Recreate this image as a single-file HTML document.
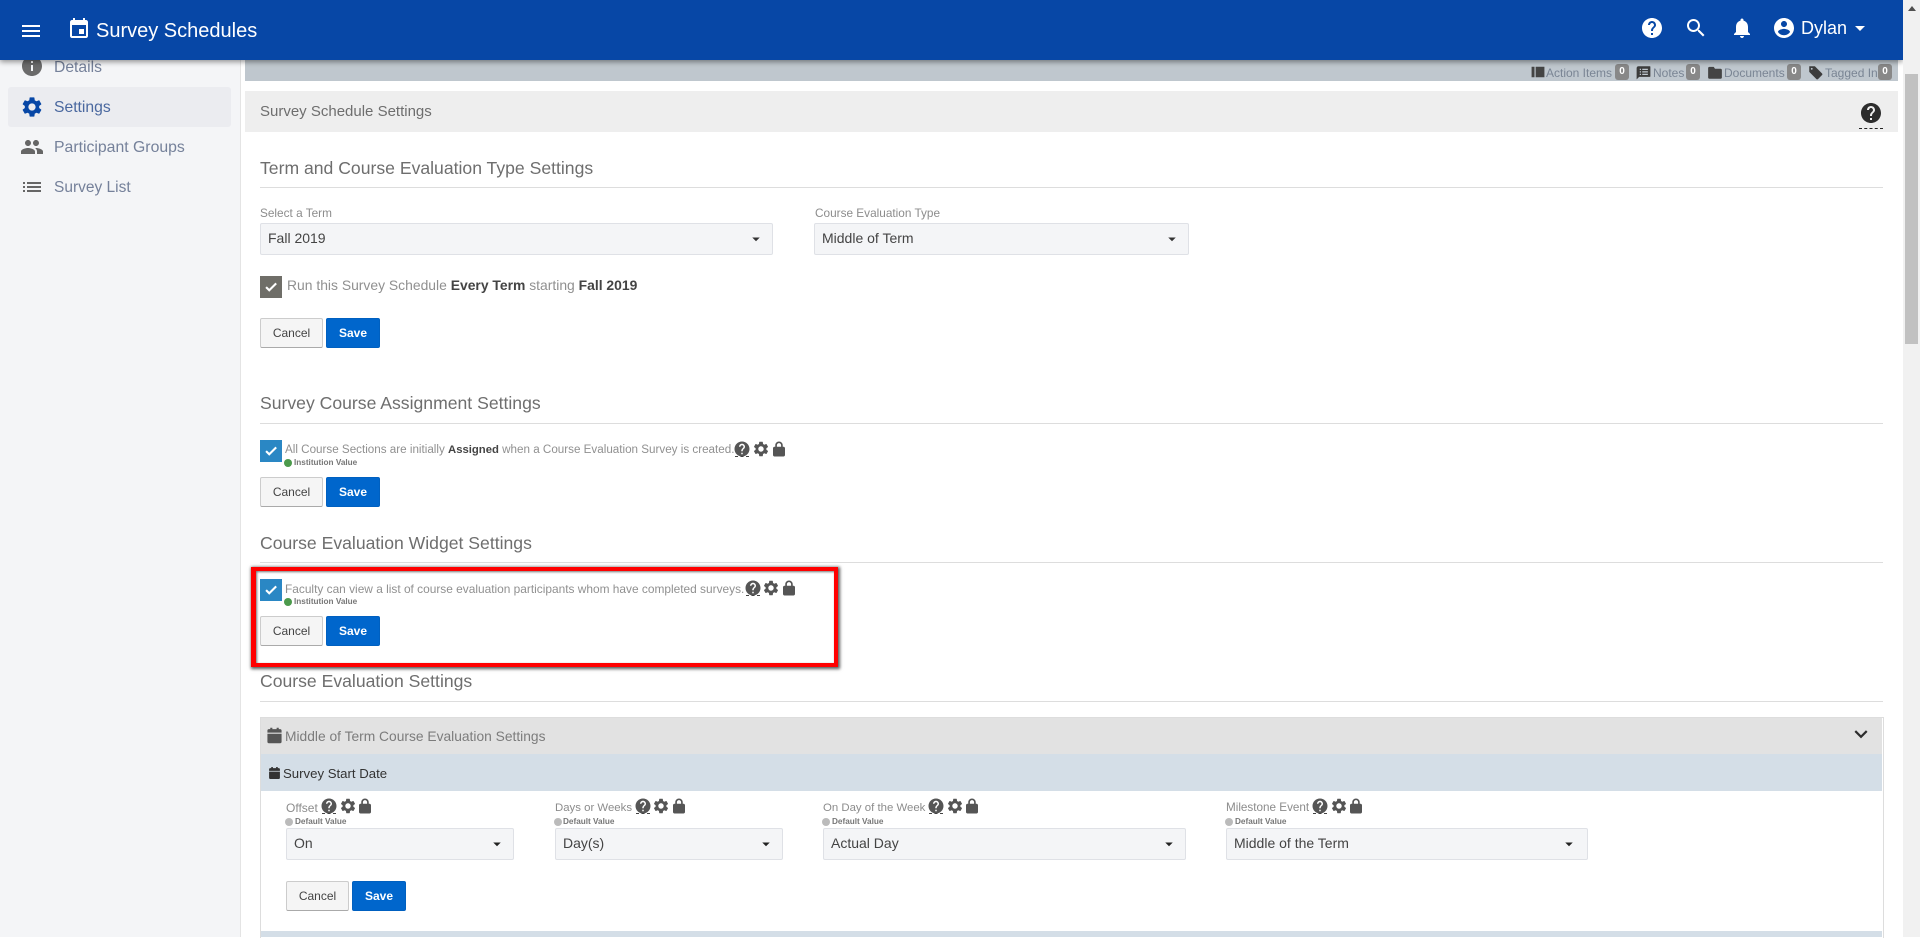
<!DOCTYPE html>
<html><head><meta charset="utf-8"><title>Survey Schedules</title>
<style>
html,body{margin:0;padding:0;width:1920px;height:937px;overflow:hidden;background:#fff;font-family:"Liberation Sans",sans-serif}
.a{position:absolute}
.t{position:absolute;white-space:nowrap;line-height:20px;height:20px}
svg.i{position:absolute;display:block}
.h{font-size:17.6px;color:#6e6e6e}
.hr{position:absolute;left:260px;width:1623px;height:1px;background:#ddd}
.sel{position:absolute;box-sizing:border-box;background:#f4f5f7;border:1px solid #dfe1e6;border-radius:2px}
.val{font-size:14px;color:#444}
.lab{font-size:11.8px;color:#8c8c8c}
.lab2{font-size:11.4px;color:#8c8c8c}
.nav{font-size:15.7px;color:#75819a}
.body{font-size:11.9px;color:#909090}
.body b{color:#444;font-weight:bold}
.btn{position:absolute;box-sizing:border-box;height:30px;font-size:12px;line-height:28px;text-align:center;border-radius:2px}
.c{width:63px;background:#f5f5f5;border:1px solid #ccc;border-bottom-color:#aaa;color:#444}
.s{width:54px;background:#0066cc;border:1px solid #0060c0;color:#fff;font-weight:bold}
.cb{position:absolute;width:22px;height:22px;background:#2a87c4}
.dot{position:absolute;width:8px;height:8px;border-radius:50%}
.m{font-size:8.2px;font-weight:bold;color:#777;line-height:10px;height:10px}
.tag{font-size:12px;color:#7a8594}
.bd{position:absolute;top:64px;width:14px;height:16px;background:#888;border-radius:3px;color:#fff;font-size:10px;font-weight:bold;text-align:center;line-height:15px}
.dash{position:absolute;height:0;border-top:1px dashed #444}
</style></head>
<body>
<svg width="0" height="0" style="position:absolute">
<symbol id="menu" viewBox="0 0 24 24"><path d="M3 18h18v-2H3v2zm0-5h18v-2H3v2zm0-7v2h18V6H3z"/></symbol>
<symbol id="event" viewBox="0 0 24 24"><path d="M17 12h-5v5h5v-5zM16 1v2H8V1H6v2H5c-1.11 0-1.99.9-1.99 2L3 19c0 1.1.89 2 2 2h14c1.1 0 2-.9 2-2V5c0-1.1-.9-2-2-2h-1V1h-2zm3 18H5V8h14v11z"/></symbol>
<symbol id="info" viewBox="0 0 24 24"><path d="M12 2C6.48 2 2 6.48 2 12s4.48 10 10 10 10-4.48 10-10S17.52 2 12 2zm1 15h-2v-6h2v6zm0-8h-2V7h2v2z"/></symbol>
<symbol id="gear" viewBox="0 0 24 24"><path d="M19.14 12.94c.04-.3.06-.61.06-.94 0-.32-.02-.64-.07-.94l2.03-1.58c.18-.14.23-.41.12-.61l-1.92-3.32c-.12-.22-.37-.29-.59-.22l-2.39.96c-.5-.38-1.03-.7-1.62-.94l-.36-2.54c-.04-.24-.24-.41-.48-.41h-3.84c-.24 0-.43.17-.47.41l-.36 2.54c-.59.24-1.13.57-1.62.94l-2.39-.96c-.22-.08-.47 0-.59.22L2.74 8.87c-.12.21-.08.47.12.61l2.03 1.58c-.05.3-.09.63-.09.94s.02.64.07.94l-2.03 1.58c-.18.14-.23.41-.12.61l1.92 3.32c.12.22.37.29.59.22l2.39-.96c.5.38 1.03.7 1.62.94l.36 2.54c.05.24.24.41.48.41h3.84c.24 0 .44-.17.47-.41l.36-2.54c.59-.24 1.13-.56 1.62-.94l2.39.96c.22.08.47 0 .59-.22l1.92-3.32c.12-.22.07-.47-.12-.61l-2.01-1.58zM12 15.6c-1.98 0-3.6-1.62-3.6-3.6s1.62-3.6 3.6-3.6 3.6 1.62 3.6 3.6-1.62 3.6-3.6 3.6z"/></symbol>
<symbol id="people" viewBox="0 0 24 24"><path d="M16 11c1.66 0 2.99-1.34 2.99-3S17.66 5 16 5c-1.66 0-3 1.34-3 3s1.34 3 3 3zm-8 0c1.66 0 2.99-1.34 2.99-3S9.66 5 8 5C6.34 5 5 6.34 5 8s1.34 3 3 3zm0 2c-2.33 0-7 1.17-7 3.5V19h14v-2.5c0-2.33-4.67-3.5-7-3.5zm8 0c-.29 0-.62.02-.97.05 1.16.84 1.97 1.97 1.97 3.45V19h6v-2.5c0-2.33-4.67-3.5-7-3.5z"/></symbol>
<symbol id="list" viewBox="0 0 24 24"><path d="M3 13h2v-2H3v2zm0 4h2v-2H3v2zm0-8h2V7H3v2zm4 4h14v-2H7v2zm0 4h14v-2H7v2zM7 7v2h14V7H7z"/></symbol>
<symbol id="help" viewBox="0 0 24 24"><path d="M12 2C6.48 2 2 6.48 2 12s4.48 10 10 10 10-4.48 10-10S17.52 2 12 2zm1 17h-2v-2h2v2zm2.07-7.75l-.9.92C13.45 12.9 13 13.5 13 15h-2v-.5c0-1.1.45-2.1 1.17-2.83l1.24-1.26c.37-.36.59-.86.59-1.41 0-1.1-.9-2-2-2s-2 .9-2 2H8c0-2.21 1.79-4 4-4s4 1.79 4 4c0 .88-.36 1.68-.93 2.25z"/></symbol>
<symbol id="search" viewBox="0 0 24 24"><path d="M15.5 14h-.79l-.28-.27C15.41 12.59 16 11.11 16 9.5 16 5.91 13.09 3 9.5 3S3 5.91 3 9.5 5.91 16 9.5 16c1.61 0 3.09-.59 4.23-1.57l.27.28v.79l5 4.99L20.49 19l-4.99-5zm-6 0C7.01 14 5 11.99 5 9.5S7.01 5 9.5 5 14 7.01 14 9.5 11.99 14 9.5 14z"/></symbol>
<symbol id="bell" viewBox="0 0 24 24"><path d="M12 22c1.1 0 2-.9 2-2h-4c0 1.1.89 2 2 2zm6-6v-5c0-3.07-1.64-5.64-4.5-6.32V4c0-.83-.67-1.5-1.5-1.5s-1.5.67-1.5 1.5v.68C7.63 5.36 6 7.92 6 11v5l-2 2v1h16v-1l-2-2z"/></symbol>
<symbol id="acct" viewBox="0 0 24 24"><path d="M12 2C6.48 2 2 6.48 2 12s4.48 10 10 10 10-4.48 10-10S17.52 2 12 2zm0 3c1.66 0 3 1.34 3 3s-1.34 3-3 3-3-1.34-3-3 1.34-3 3-3zm0 14.2c-2.5 0-4.71-1.28-6-3.22.03-1.99 4-3.08 6-3.08 1.99 0 5.97 1.09 6 3.08-1.29 1.94-3.5 3.22-6 3.22z"/></symbol>
<symbol id="drop" viewBox="0 0 24 24"><path d="M7 10l5 5 5-5z"/></symbol>
<symbol id="chev" viewBox="0 0 24 24"><path d="M16.59 8.59L12 13.17 7.41 8.59 6 10l6 6 6-6z"/></symbol>
<symbol id="check" viewBox="0 0 24 24"><path d="M9 16.17L4.83 12l-1.42 1.41L9 19 21 7l-1.41-1.41z" stroke="currentColor" stroke-width="1.6"/></symbol>
<symbol id="lock" viewBox="0 0 24 24"><path d="M18 9h-1V7c0-2.76-2.24-5-5-5S7 4.24 7 7v2H6c-1.1 0-2 .9-2 2v9c0 1.1.9 2 2 2h12c1.1 0 2-.9 2-2v-9c0-1.1-.9-2-2-2zM9.2 7c0-1.55 1.25-2.8 2.8-2.8s2.8 1.25 2.8 2.8v2H9.2V7z"/></symbol>
<symbol id="cal" viewBox="0 0 24 24"><path d="M6 1h3v3H6zM15 1h3v3h-3zM4 3h16c1.1 0 2 .9 2 2v3H2V5c0-1.1.9-2 2-2zM2 9.5h20V21c0 1.1-.9 2-2 2H4c-1.1 0-2-.9-2-2z"/></symbol>
<symbol id="book" viewBox="0 0 24 24"><path d="M1 3h5v18H1zM8 3h15v18H8z"/></symbol>
<symbol id="note" viewBox="0 0 24 24"><path d="M4 2h18c.6 0 1 .4 1 1v15c0 .6-.4 1-1 1H5l-4 4V5c0-1.7 1.3-3 3-3zm2 4v2h2V6zm4 0v2h9V6zM6 10v2h2v-2zm4 0v2h9v-2zM6 14v2h2v-2zm4 0v2h9v-2z" fill-rule="evenodd"/></symbol>
<symbol id="folder" viewBox="0 0 24 24"><path d="M10 3H3C1.9 3 1 3.9 1 5v15c0 1.1.9 2 2 2h18c1.1 0 2-.9 2-2V8c0-1.1-.9-2-2-2h-9l-2-3z"/></symbol>
<symbol id="tagi" viewBox="0 0 24 24"><path fill-rule="evenodd" d="M2 2h9l11.5 11.5c.7.7.7 1.8 0 2.5l-6.5 6.5c-.7.7-1.8.7-2.5 0L2 11zM6 4.5a1.5 1.5 0 100 3 1.5 1.5 0 000-3z"/></symbol>
</svg>

<!-- sidebar -->
<div class="a" style="left:0;top:0;width:240px;height:937px;background:#f4f5f7;border-right:1px solid #e4e4e4"></div>
<svg class="i" style="left:20px;top:54px;fill:#6b6b6b" width="24" height="24"><use href="#info"/></svg>
<div class="t nav" style="left:54px;top:58px">Details</div>
<div class="a" style="left:8px;top:87px;width:223px;height:40px;background:#ebecf0;border-radius:3px"></div>
<svg class="i" style="left:20px;top:95px;fill:#0747a6" width="24" height="24"><use href="#gear"/></svg>
<div class="t nav" style="left:54px;top:98px;color:#4a689f">Settings</div>
<svg class="i" style="left:20px;top:135px;fill:#666" width="24" height="24"><use href="#people"/></svg>
<div class="t nav" style="left:54px;top:138px;font-size:15.8px">Participant Groups</div>
<svg class="i" style="left:20px;top:175px;fill:#666" width="24" height="24"><use href="#list"/></svg>
<div class="t nav" style="left:54px;top:178px;font-size:15.5px">Survey List</div>

<!-- top strip -->
<div class="a" style="left:245px;top:60px;width:1653px;height:21px;background:#bfc7ce"></div>
<svg class="i" style="left:1531px;top:65px;fill:#444" width="14" height="14" preserveAspectRatio="none"><use href="#book"/></svg>
<div class="t tag" style="left:1546px;top:63px">Action Items</div>
<div class="bd" style="left:1615px">0</div>
<svg class="i" style="left:1636px;top:65px;fill:#3c3c3c" width="15" height="15"><use href="#note"/></svg>
<div class="t tag" style="left:1653px;top:63px">Notes</div>
<div class="bd" style="left:1686px">0</div>
<svg class="i" style="left:1707px;top:65px;fill:#444" width="16" height="15"><use href="#folder"/></svg>
<div class="t tag" style="left:1724px;top:63px">Documents</div>
<div class="bd" style="left:1787px">0</div>
<svg class="i" style="left:1808px;top:65px;fill:#3c3c3c" width="15" height="15"><use href="#tagi"/></svg>
<div class="t tag" style="left:1825px;top:63px">Tagged In</div>
<div class="bd" style="left:1878px">0</div>

<!-- panel header -->
<div class="a" style="left:245px;top:91px;width:1653px;height:41px;background:#eee"></div>
<div class="t" style="left:260px;top:102px;font-size:15px;color:#6e6e6e">Survey Schedule Settings</div>
<svg class="i" style="left:1859px;top:101px;fill:#2d2d2d" width="24" height="24"><use href="#help"/></svg>
<div class="dash" style="left:1859px;top:128px;width:24px;border-top-color:#222"></div>

<!-- section 1 -->
<div class="t h" style="left:260px;top:158px">Term and Course Evaluation Type Settings</div>
<div class="hr" style="top:187px"></div>
<div class="t lab" style="left:260px;top:203px">Select a Term</div>
<div class="sel" style="left:260px;top:223px;width:513px;height:32px"></div>
<div class="t val" style="left:268px;top:228px">Fall 2019</div>
<svg class="i" style="left:747px;top:230px;fill:#333" width="18" height="18"><use href="#drop"/></svg>
<div class="t lab" style="left:815px;top:203px">Course Evaluation Type</div>
<div class="sel" style="left:814px;top:223px;width:375px;height:32px"></div>
<div class="t val" style="left:822px;top:228px">Middle of Term</div>
<svg class="i" style="left:1163px;top:230px;fill:#333" width="18" height="18"><use href="#drop"/></svg>
<div class="cb" style="left:260px;top:276px;background:#6f6e68"></div>
<svg class="i" style="left:264px;top:280px;fill:#fff;color:#fff" width="14" height="14"><use href="#check"/></svg>
<div class="t body" style="left:287px;top:275px;font-size:13.9px">Run this Survey Schedule <b>Every Term</b> starting <b>Fall 2019</b></div>
<div class="btn c" style="left:260px;top:318px">Cancel</div>
<div class="btn s" style="left:326px;top:318px">Save</div>

<!-- section 2 -->
<div class="t h" style="left:260px;top:393px">Survey Course Assignment Settings</div>
<div class="hr" style="top:423px"></div>
<div class="cb" style="left:260px;top:440px"></div>
<svg class="i" style="left:264px;top:444px;fill:#fff;color:#fff" width="14" height="14"><use href="#check"/></svg>
<div class="t body" style="left:285px;top:440px;font-size:11.65px">All Course Sections are initially <b style="font-size:11.3px">Assigned</b> when a Course Evaluation Survey is created.</div>
<svg class="i" style="left:733px;top:440px;fill:#555" width="18" height="18"><use href="#help"/></svg>
<div class="dash" style="left:735px;top:456px;width:14px"></div>
<svg class="i" style="left:752px;top:440px;fill:#555" width="18" height="18"><use href="#gear"/></svg>
<svg class="i" style="left:770px;top:440px;fill:#555" width="18" height="18"><use href="#lock"/></svg>
<div class="dot" style="left:284px;top:459px;background:#4c9a4c"></div>
<div class="t m" style="left:294px;top:458px">Institution Value</div>
<div class="btn c" style="left:260px;top:477px">Cancel</div>
<div class="btn s" style="left:326px;top:477px">Save</div>

<!-- section 3 -->
<div class="t h" style="left:260px;top:533px">Course Evaluation Widget Settings</div>
<div class="hr" style="top:562px"></div>
<div class="a" style="left:251px;top:567px;width:587px;height:100px;box-sizing:border-box;border:4px solid #ff0000;border-left-width:5px;box-shadow:1px 1px 3px 1px rgba(0,0,0,.65),inset 1px 1px 2px rgba(0,0,0,.55)"></div>
<div class="cb" style="left:260px;top:579px"></div>
<svg class="i" style="left:264px;top:583px;fill:#fff;color:#fff" width="14" height="14"><use href="#check"/></svg>
<div class="t body" style="left:285px;top:579px">Faculty can view a list of course evaluation participants whom have completed surveys.</div>
<svg class="i" style="left:744px;top:579px;fill:#555" width="18" height="18"><use href="#help"/></svg>
<div class="dash" style="left:746px;top:595px;width:14px"></div>
<svg class="i" style="left:762px;top:579px;fill:#555" width="18" height="18"><use href="#gear"/></svg>
<svg class="i" style="left:780px;top:579px;fill:#555" width="18" height="18"><use href="#lock"/></svg>
<div class="dot" style="left:284px;top:598px;background:#4c9a4c"></div>
<div class="t m" style="left:294px;top:597px">Institution Value</div>
<div class="btn c" style="left:260px;top:616px">Cancel</div>
<div class="btn s" style="left:326px;top:616px">Save</div>

<!-- section 4 -->
<div class="t h" style="left:260px;top:671px">Course Evaluation Settings</div>
<div class="hr" style="top:701px"></div>
<div class="a" style="left:260px;top:717px;width:1622px;height:220px;border:1px solid #ddd;border-bottom:0"></div>
<div class="a" style="left:261px;top:718px;width:1621px;height:36px;background:#e2e2e2"></div>
<svg class="i" style="left:266px;top:727px;fill:#555" width="17" height="17"><use href="#cal"/></svg>
<div class="t" style="left:285px;top:727px;font-size:13.8px;color:#7c7c7c">Middle of Term Course Evaluation Settings</div>
<svg class="i" style="left:1848px;top:721px;fill:#2d2d2d" width="26" height="26"><use href="#chev"/></svg>
<div class="a" style="left:261px;top:754px;width:1621px;height:37px;background:#d4dee7"></div>
<svg class="i" style="left:268px;top:766px;fill:#333" width="13" height="14"><use href="#cal"/></svg>
<div class="t" style="left:283px;top:764px;font-size:13.2px;color:#333">Survey Start Date</div>

<!-- fields -->
<div class="t lab2" style="left:286px;top:798px;font-size:12px">Offset</div>
<svg class="i" style="left:320px;top:797px;fill:#555" width="18" height="18"><use href="#help"/></svg>
<div class="dash" style="left:322px;top:813px;width:14px"></div>
<svg class="i" style="left:339px;top:797px;fill:#555" width="18" height="18"><use href="#gear"/></svg>
<svg class="i" style="left:356px;top:797px;fill:#555" width="18" height="18"><use href="#lock"/></svg>
<div class="dot" style="left:285px;top:818px;background:#bbb"></div>
<div class="t m" style="left:295px;top:817px">Default Value</div>
<div class="sel" style="left:286px;top:828px;width:228px;height:32px"></div>
<div class="t val" style="left:294px;top:833px">On</div>
<svg class="i" style="left:488px;top:835px;fill:#222" width="18" height="18"><use href="#drop"/></svg>

<div class="t lab2" style="left:555px;top:798px">Days or Weeks</div>
<svg class="i" style="left:634px;top:797px;fill:#555" width="18" height="18"><use href="#help"/></svg>
<div class="dash" style="left:636px;top:813px;width:14px"></div>
<svg class="i" style="left:652px;top:797px;fill:#555" width="18" height="18"><use href="#gear"/></svg>
<svg class="i" style="left:670px;top:797px;fill:#555" width="18" height="18"><use href="#lock"/></svg>
<div class="dot" style="left:554px;top:818px;background:#bbb"></div>
<div class="t m" style="left:563px;top:817px">Default Value</div>
<div class="sel" style="left:555px;top:828px;width:228px;height:32px"></div>
<div class="t val" style="left:563px;top:833px">Day(s)</div>
<svg class="i" style="left:757px;top:835px;fill:#222" width="18" height="18"><use href="#drop"/></svg>

<div class="t lab2" style="left:823px;top:798px">On Day of the Week</div>
<svg class="i" style="left:927px;top:797px;fill:#555" width="18" height="18"><use href="#help"/></svg>
<div class="dash" style="left:929px;top:813px;width:14px"></div>
<svg class="i" style="left:946px;top:797px;fill:#555" width="18" height="18"><use href="#gear"/></svg>
<svg class="i" style="left:963px;top:797px;fill:#555" width="18" height="18"><use href="#lock"/></svg>
<div class="dot" style="left:822px;top:818px;background:#bbb"></div>
<div class="t m" style="left:832px;top:817px">Default Value</div>
<div class="sel" style="left:823px;top:828px;width:363px;height:32px"></div>
<div class="t val" style="left:831px;top:833px">Actual Day</div>
<svg class="i" style="left:1160px;top:835px;fill:#222" width="18" height="18"><use href="#drop"/></svg>

<div class="t lab2" style="left:1226px;top:798px;font-size:11.7px">Milestone Event</div>
<svg class="i" style="left:1311px;top:797px;fill:#555" width="18" height="18"><use href="#help"/></svg>
<div class="dash" style="left:1313px;top:813px;width:14px"></div>
<svg class="i" style="left:1330px;top:797px;fill:#555" width="18" height="18"><use href="#gear"/></svg>
<svg class="i" style="left:1347px;top:797px;fill:#555" width="18" height="18"><use href="#lock"/></svg>
<div class="dot" style="left:1225px;top:818px;background:#bbb"></div>
<div class="t m" style="left:1235px;top:817px">Default Value</div>
<div class="sel" style="left:1226px;top:828px;width:362px;height:32px"></div>
<div class="t val" style="left:1234px;top:833px">Middle of the Term</div>
<svg class="i" style="left:1560px;top:835px;fill:#222" width="18" height="18"><use href="#drop"/></svg>

<div class="btn c" style="left:286px;top:881px">Cancel</div>
<div class="btn s" style="left:352px;top:881px">Save</div>
<div class="a" style="left:261px;top:931px;width:1621px;height:6px;background:#d4dee7"></div>

<!-- top bar -->
<div class="a" style="left:0;top:0;width:1903px;height:60px;background:#0747a6;box-shadow:0 2px 5px rgba(0,0,0,.4)"></div>
<svg class="i" style="left:19px;top:19px;fill:#fff" width="24" height="24"><use href="#menu"/></svg>
<svg class="i" style="left:67px;top:17px;fill:#fff" width="24" height="24"><use href="#event"/></svg>
<div class="t" style="left:96px;top:21px;font-size:20px;color:#fff">Survey Schedules</div>
<svg class="i" style="left:1640px;top:16px;fill:#fff" width="24" height="24"><use href="#help"/></svg>
<svg class="i" style="left:1684px;top:16px;fill:#fff" width="24" height="24"><use href="#search"/></svg>
<svg class="i" style="left:1730px;top:16px;fill:#fff" width="24" height="24"><use href="#bell"/></svg>
<svg class="i" style="left:1772px;top:16px;fill:#fff" width="24" height="24"><use href="#acct"/></svg>
<div class="t" style="left:1801px;top:18px;font-size:18px;color:#fff">Dylan</div>
<svg class="i" style="left:1848px;top:16px;fill:#fff" width="24" height="24"><use href="#drop"/></svg>

<!-- scrollbar -->
<div class="a" style="left:1903px;top:0;width:17px;height:937px;background:#f1f1f1"></div>
<div class="a" style="left:1905px;top:74px;width:13px;height:270px;background:#c1c1c1"></div>
<div class="a" style="left:1908px;top:6px;width:0;height:0;border-left:4px solid transparent;border-right:4px solid transparent;border-bottom:5px solid #505050"></div>
</body></html>
